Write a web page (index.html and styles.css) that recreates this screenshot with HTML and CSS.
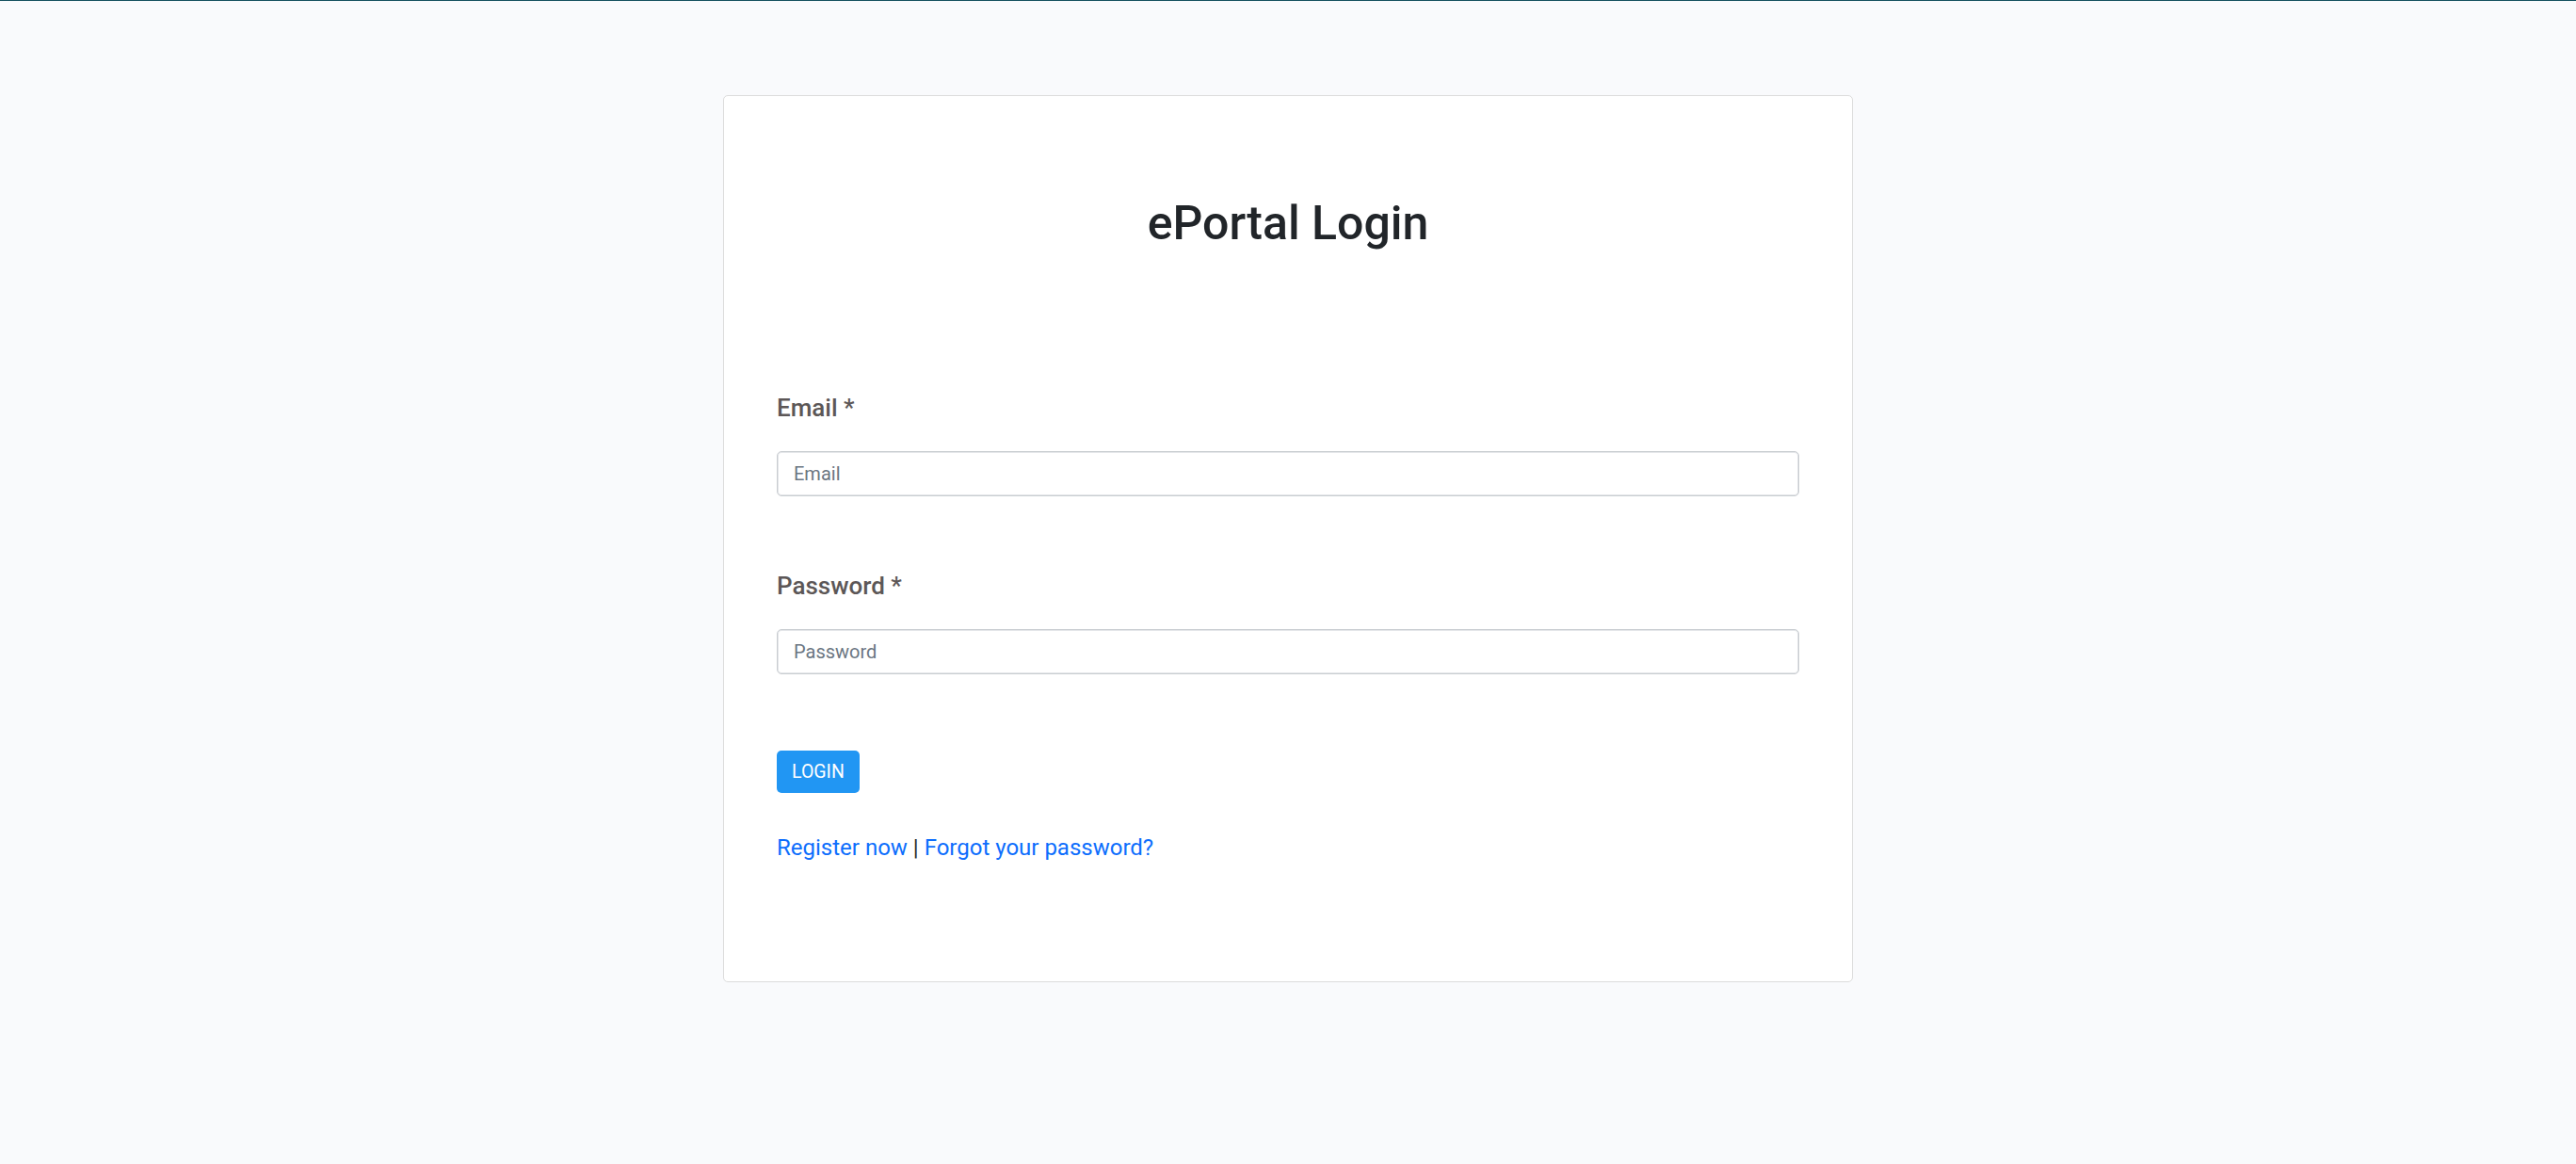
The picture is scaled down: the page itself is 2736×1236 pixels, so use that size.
FILE: index.html
```html
<!DOCTYPE html>
<html lang="en">
<head>
<meta charset="utf-8">
<title>ePortal Login</title>
<link rel="stylesheet" href="styles.css">
</head>
<body>
<div class="topline"></div>
<main class="card">
  <h1 class="title">ePortal Login</h1>
  <form class="form">
    <div class="group">
      <label class="label" for="email">Email *</label>
      <input class="input" id="email" type="email" placeholder="Email">
    </div>
    <div class="group">
      <label class="label" for="password">Password *</label>
      <input class="input" id="password" type="password" placeholder="Password">
    </div>
    <button class="btn" type="button">LOGIN</button>
  </form>
  <p class="links"><a href="#">Register now</a> | <a href="#">Forgot your password?</a></p>
</main>
</body>
</html>
```
FILE: styles.css
```css
html, body {
  margin: 0;
  padding: 0;
}
html {
  background: #f9fafc;
}
body {
  background: #f9fafc;
  font-family: Roboto, "Liberation Sans", sans-serif;
  color: #212529;
}
.topline {
  height: 1px;
  background: #14505e;
}
.card {
  box-sizing: border-box;
  width: 1200px;
  margin: 100px auto 0;
  background: #fff;
  border: 1px solid #dcdcdc;
  border-radius: 5px;
  padding: 105px 56px 124px;
}
.title {
  margin: 0 0 147px;
  font-size: 50px;
  line-height: 60px;
  font-weight: 500;
  text-align: center;
  color: #212529;
}
.form {
  display: flex;
  flex-direction: column;
  align-items: flex-start;
}
.group {
  align-self: stretch;
  display: flex;
  flex-direction: column;
  margin-bottom: 76px;
}
.group + .btn {
  margin-top: 5px;
}
.label {
  font-size: 26px;
  line-height: 39px;
  font-weight: 500;
  color: #5c5757;
  margin-bottom: 26px;
}
.input {
  box-sizing: border-box;
  height: 48px;
  width: 100%;
  border: 1px solid #c9cdd1;
  box-shadow: inset 0 0 0 1px #e4e6e9;
  border-radius: 5px;
  padding: 0 17px;
  font-family: Roboto, "Liberation Sans", sans-serif;
  font-size: 20px;
  color: #495057;
  background: #fff;
  outline: none;
}
.input::placeholder {
  color: #6b7682;
}
.btn {
  height: 45px;
  padding: 0 16px;
  border: none;
  border-radius: 5px;
  background: #2196f3;
  color: #fff;
  font-family: Roboto, "Liberation Sans", sans-serif;
  font-size: 19.5px;
  font-weight: 400;
  cursor: pointer;
}
.links {
  margin: 40px 0 0;
  font-size: 24px;
  line-height: 36px;
  color: #2b2b2b;
}
.links a {
  color: #0d6efd;
  text-decoration: none;
}
```
